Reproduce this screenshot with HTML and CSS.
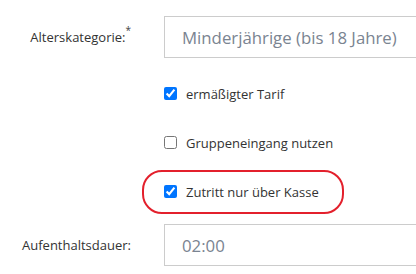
FILE: index.html
```html
<!DOCTYPE html>
<html lang="de">
<head>
    <meta charset="UTF-8">
    <title>Ticket</title>
    <link rel="stylesheet" href="styles.css">
</head>
<body>
    <div class="form">
        <div class="row row-first">
            <label class="label" for="kategorie">Alterskategorie:<sup class="req">*</sup></label>
            <div class="field">
                <input type="text" id="kategorie" class="input" placeholder="Minderjährige (bis 18 Jahre)">
            </div>
        </div>

        <div class="row check-row">
            <div class="label"></div>
            <label class="check"><input type="checkbox" checked> ermäßigter Tarif</label>
        </div>

        <div class="row check-row">
            <div class="label"></div>
            <label class="check"><input type="checkbox"> Gruppeneingang nutzen</label>
        </div>

        <div class="row check-row">
            <div class="label"></div>
            <label class="check"><input type="checkbox" checked> Zutritt nur über Kasse</label>
            <!-- highlight marker -->
            <div class="highlight"></div>
        </div>

        <div class="row row-last">
            <label class="label" for="dauer">Aufenthaltsdauer:</label>
            <div class="field">
                <input type="text" id="dauer" class="input input-value" value="02:00">
            </div>
        </div>
    </div>
</body>
</html>
```

FILE: styles.css
```css
* {
    margin: 0;
    padding: 0;
    box-sizing: border-box;
}

body {
    font-family: 'Open Sans', 'Liberation Sans', sans-serif;
    background: #fff;
    color: #333;
    width: 416px;
    height: 274px;
    overflow: hidden;
}

.form {
    width: 416px;
}

.row {
    display: flex;
    align-items: center;
    position: relative;
}

.row-first {
    margin-top: 16px;
    height: 42px;
}

.check-row {
    height: 49px;
}

.check-row:nth-child(2) {
    margin-top: 11px;
}

.row-last {
    margin-top: 8px;
    height: 42px;
}

.label {
    flex: 0 0 164px;
    width: 164px;
    padding-right: 33px;
    text-align: right;
    font-size: 13px;
    color: #333;
}

.req {
    font-size: 10px;
    color: #444;
    vertical-align: top;
    position: relative;
    top: -5px;
}

/* field is cut off at the right edge of the frame */
.field {
    flex: 1;
    min-width: 0;
    height: 42px;
}

.input {
    width: 100%;
    height: 42px;
    border: 1px solid #ccc;
    border-right: none;
    padding-left: 17px;
    font-family: inherit;
    font-size: 16.8px;
    color: #7a8491;
    outline: none;
}

.input::placeholder {
    color: #7a8491;
}

.check {
    display: flex;
    align-items: center;
    font-size: 13px;
    color: #333;
}

.check input {
    width: 13px;
    height: 13px;
    margin: 0 9px 0 0;
}

.highlight {
    position: absolute;
    left: 142px;
    top: 3px;
    width: 202px;
    height: 44px;
    border: 2px solid #e3202c;
    border-radius: 20px;
    pointer-events: none;
}
```
